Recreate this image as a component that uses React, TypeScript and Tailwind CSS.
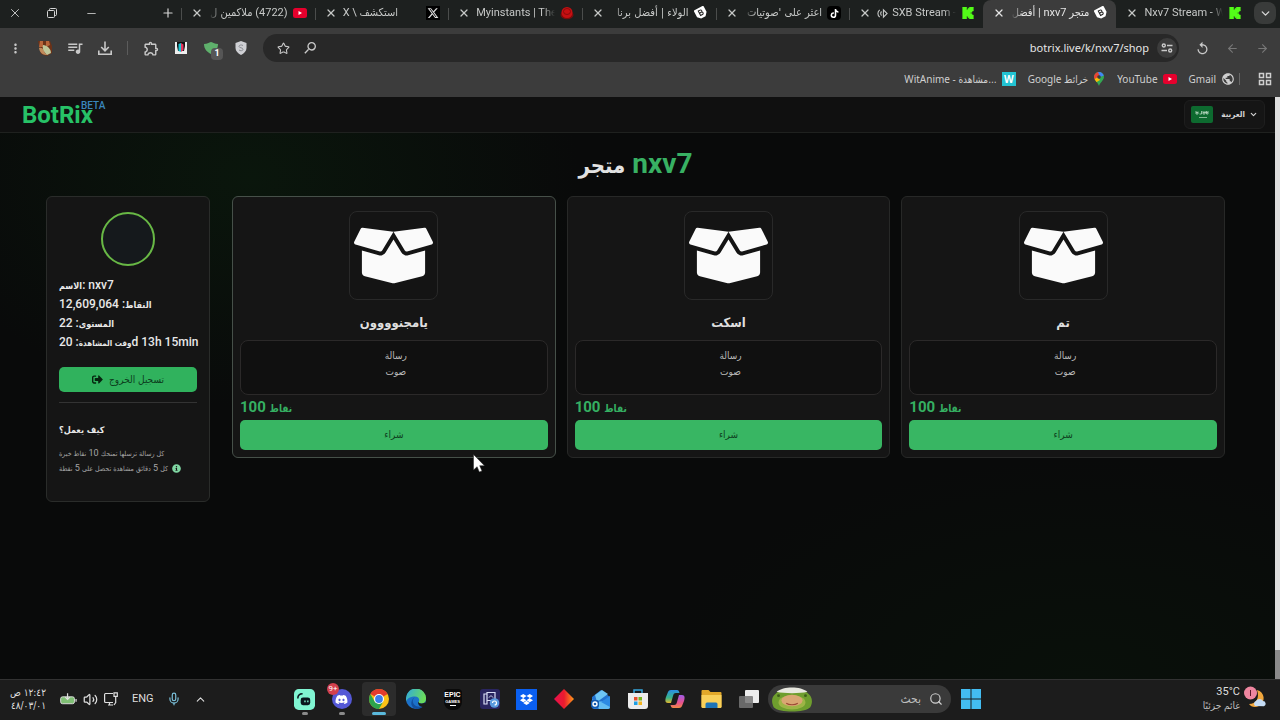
import type { ReactNode } from "react";
import {
  X,
  Plus,
  Minus,
  Star,
  ChevronDown,
  ChevronUp,
  ArrowLeft,
  ArrowRight,
  Mic,
  Volume2,
  Search,
} from "lucide-react";
import { FaBoxOpen, FaSignOutAlt, FaTiktok, FaDropbox, FaDiscord, FaInfoCircle } from "react-icons/fa";
import { FaXTwitter } from "react-icons/fa6";
import { MdQueueMusic, MdMoreVert, MdPublic, MdOutlineExtension, MdSearch, MdReplay } from "react-icons/md";

function Ar({ children, className = "" }: { children: ReactNode; className?: string }) {
  return (
    <span lang="ar" className={`font-['DejaVu_Sans_Condensed','DejaVu_Sans',sans-serif] ${className}`}>
      {children}
    </span>
  );
}

/* ---------- small logos ---------- */

function KickLogo() {
  return (
    <svg viewBox="0 0 24 24" className="size-3 shrink-0" fill="#53fc18" aria-hidden="true">
      <path d="M1.333 0h8v5.333H12V2.667h2.667V0h8v8H20v2.667h-2.667v2.666H20V16h2.667v8h-8v-2.667H12v-2.666H9.333V24h-8Z" stroke="#53fc18" />
    </svg>
  );
}

function YoutubeLogo() {
  return (
    <svg viewBox="0 0 14 10" className="h-2.5 w-3.5 shrink-0" aria-hidden="true">
      <rect width="14" height="10" rx="2.500" fill="#e6002d" />
      <path d="M5.500 3v4L9 5z" fill="#fff" />
    </svg>
  );
}

function BotrixLogo() {
  return (
    <svg viewBox="0 0 14 14" className="size-3.5 shrink-0" aria-hidden="true">
      <g transform="rotate(-28 7 7)">
        <path d="M2.500 1.500h9a1 1 0 0 1 1 1v6L9.500 12H4.500l-3-3V2.500a1 1 0 0 1 1-1z" fill="#fff" />
        <path d="M5.500 4h2a1.200 1.200 0 0 1 0 2.500h-2zM5.500 6.500H8A1.300 1.300 0 0 1 8 9H5.500z" fill="none" stroke="#222" />
      </g>
    </svg>
  );
}

function XLogo() {
  return (
    <span className="flex size-3.5 shrink-0 items-center justify-center bg-black">
      <FaXTwitter size={12} color="#ddd" />
    </span>
  );
}

function TiktokLogo() {
  return (
    <span className="flex size-3.5 shrink-0 items-center justify-center rounded-sm bg-black">
      <FaTiktok size={9} color="#fff" />
    </span>
  );
}

function MyinstantsLogo() {
  return (
    <svg viewBox="0 0 14 14" className="size-3.5 shrink-0" aria-hidden="true">
      <ellipse cx="7" cy="9" rx="6.500" ry="4.200" fill="#7a0d0d" />
      <circle cx="7" cy="6.500" r="5.500" fill="#c70f12" />
      <ellipse cx="7" cy="5.500" rx="3.500" ry="3" fill="none" stroke="#8c0a0a" />
    </svg>
  );
}

function MapsPin() {
  return (
    <svg viewBox="0 0 12 14" className="h-3.5 w-3 shrink-0" aria-hidden="true">
      <clipPath id="pin">
        <path d="M6 0a5 5 0 0 1 5 5c0 3-3.500 5-5 9C4.500 10 1 8 1 5a5 5 0 0 1 5-5z" />
      </clipPath>
      <g clipPath="url(#pin)">
        <rect width="12" height="14" fill="#34a853" />
        <path d="M0 0h6v5L1 9H0z" fill="#ea4335" />
        <path d="M5 0h7v3L7 5z" fill="#4285f4" />
        <path d="M0 8 5 5l2 3-5 3z" fill="#fbbc04" />
      </g>
      <circle cx="6" cy="5" r="1.800" fill="#3c3c3c" />
    </svg>
  );
}

/* ---------- browser chrome ---------- */

type TabInfo = { title: ReactNode; icon: ReactNode; rtl?: boolean; active?: boolean };

const tabs: TabInfo[] = [
  { title: <>(4722) <Ar>ملاكمين ل</Ar></>, icon: <YoutubeLogo />, rtl: true },
  { title: <>X \ <Ar>استكشف</Ar></>, icon: <XLogo /> },
  { title: "Myinstants | The", icon: <MyinstantsLogo /> },
  { title: <Ar>الولاء | أفضل برنا</Ar>, icon: <BotrixLogo />, rtl: true },
  { title: <Ar>اعثر على 'صوتيات</Ar>, icon: <TiktokLogo />, rtl: true },
  {
    title: (
      <span className="flex items-center gap-1">
        <svg viewBox="0 0 12 12" className="size-[11px] shrink-0" fill="none" stroke="currentColor" strokeWidth="1.200" aria-hidden="true">
          <path d="M3 2a5 5 0 0 0 0 8M5 3.800a3 3 0 0 0 0 4.400M7 2v8l4-4z" />
        </svg>
        SXB Stream -
      </span>
    ),
    icon: <KickLogo />,
  },
  { title: <><Ar>متجر</Ar> nxv7 | <Ar>أفضل</Ar></>, icon: <BotrixLogo />, rtl: true, active: true },
  { title: "Nxv7 Stream - W", icon: <KickLogo /> },
];

function Tab({ tab, divider }: { tab: TabInfo; divider: boolean }) {
  const fade = tab.rtl
    ? "text-right [mask-image:linear-gradient(to_left,black_85%,transparent)]"
    : "text-left [mask-image:linear-gradient(to_right,black_85%,transparent)]";
  return (
    <div
      className={`relative flex h-7 min-w-0 flex-1 items-center gap-1 pr-[7px] pb-0.5 pl-2.5 ${
        tab.active ? "rounded-t-lg bg-[#3c3c3c] text-[#e4e4e4]" : "text-[#c6c8c7]"
      }`}
    >
      {divider && <span className="absolute top-2 left-0 h-3 w-px bg-[#4b4d4c]" />}
      <button aria-label="Close tab" className="mr-0.5 shrink-0">
        <X size={12} strokeWidth={2.500} />
      </button>
      <span
        dir={tab.rtl ? "rtl" : "ltr"}
        className={`min-w-0 flex-1 overflow-hidden text-[11px] leading-4 whitespace-nowrap ${fade}`}
      >
        {tab.title}
      </span>
      <span className="flex w-4 shrink-0 justify-center">{tab.icon}</span>
    </div>
  );
}

function TabStrip() {
  return (
    <div className="flex h-7 items-center bg-[#1d201f] pr-1 text-[#d6d6d6]">
      <div className="flex w-[181px] shrink-0 items-center pb-0.5">
        <button aria-label="Close window" className="flex w-[30px] justify-center">
          <X size={14} strokeWidth={1.500} />
        </button>
        <button aria-label="Restore window" className="flex w-11 justify-center">
          <svg viewBox="0 0 12 12" className="size-3" fill="none" stroke="currentColor" aria-hidden="true">
            <rect x="1.500" y="3.500" width="7" height="7" rx="1" />
            <path d="M3.500 3V2.500a1 1 0 0 1 1-1h5a1 1 0 0 1 1 1v5a1 1 0 0 1-1 1H9" />
          </svg>
        </button>
        <button aria-label="Minimise window" className="flex w-[34px] justify-center">
          <Minus size={13} strokeWidth={1.500} />
        </button>
        <button aria-label="New tab" className="mr-1.5 ml-auto">
          <Plus size={14} strokeWidth={2} />
        </button>
      </div>
      <div className="flex min-w-0 flex-1">
        {tabs.map((t, i) => (
          <Tab key={i} tab={t} divider={!t.active && !tabs[i - 1]?.active} />
        ))}
      </div>
      <button aria-label="Search tabs" className="mb-0.5 ml-1 flex size-[22px] shrink-0 items-center justify-center rounded-lg bg-[#393b3a]">
        <ChevronDown size={13} strokeWidth={2.500} />
      </button>
    </div>
  );
}

function Tool({ label, children }: { label: string; children: ReactNode }) {
  return (
    <button aria-label={label} className="relative flex h-7 w-[30px] shrink-0 items-center justify-center">
      {children}
    </button>
  );
}

function Toolbar() {
  return (
    <div className="flex h-10 items-center bg-[#3c3c3c] pr-[3px] text-[#c9c9c9]">
      <Tool label="Menu">
        <MdMoreVert size={15} />
      </Tool>
      <Tool label="Profile">
        <svg viewBox="0 0 16 16" className="size-4" aria-hidden="true">
          <path d="M1 1h12l2 5v7l-5 3-6-2z" fill="#6b3218" />
          <path d="M3 1h3v6H2zM9 1h3l1 4-4 2z" fill="#b8663a" />
          <path d="M2 8c2-1 4 0 5 3s3 4 5 3c-3 2-9 1-10-6z" fill="#c08a5a" />
          <path d="M6 5c4 0 8 4 8 8l-4 2C7 12 5 9 6 5z" fill="#bfc79a" />
        </svg>
      </Tool>
      <Tool label="Media controls">
        <MdQueueMusic size={18} />
      </Tool>
      <Tool label="Downloads">
        <svg viewBox="0 0 14 14" className="size-3.5" fill="none" stroke="currentColor" strokeWidth="1.600" aria-hidden="true">
          <path d="M7 .5v9M3.200 6 7 9.800 10.800 6M.8 9.500v3.700h12.400V9.500" />
        </svg>
      </Tool>
      <span className="mr-2 ml-[7px] h-3.5 w-px bg-[#5c5c5c]" />
      <Tool label="Extensions">
        <MdOutlineExtension size={17} />
      </Tool>
      <Tool label="Video downloader">
        <svg viewBox="0 0 12 12" className="size-3" aria-hidden="true">
          <rect width="12" height="12" fill="#eee" />
          <path d="M2 0h8v4l-1 5H3L2 4z" fill="#111" />
          <path d="M3.500 2 6 1v9l-2.500-1z" fill="#19c6d4" />
          <path d="M6 1l2.500 1.500V8L6 10z" fill="#e8345c" />
        </svg>
      </Tool>
      <Tool label="Security extension">
        <svg viewBox="0 0 14 12" className="h-3 w-3.5" aria-hidden="true">
          <path d="M0 2c3 0 5-1.500 7-2 2 .5 4 2 7 2 0 5-3 8-7 10C3 10 0 7 0 2z" fill="#5fb06c" />
        </svg>
        <span className="absolute right-[3px] bottom-0.5 flex size-3 items-center justify-center rounded-sm bg-[#565656] text-[9px] font-bold text-white">
          1
        </span>
      </Tool>
      <Tool label="Shield extension">
        <svg viewBox="0 0 12 14" className="h-3.5 w-3" aria-hidden="true">
          <path d="M6 0l5.500 2v5c0 3-2.500 5.500-5.500 7C3 12.500.5 10 .5 7V2z" fill="#cfd0d4" />
          <path d="M8 4.500C6.500 3.500 4 4 4 5.500S8 6.500 8 8.300 5 10 4 9" fill="none" stroke="#8b8d93" />
        </svg>
      </Tool>
      <div className="ml-[7px] flex h-7 min-w-0 flex-1 items-center rounded-full bg-[#282828] pr-0.5 pl-3.5">
        <button aria-label="Bookmark this page">
          <Star size={13} />
        </button>
        <button aria-label="Zoom" className="ml-3">
          <MdSearch size={16} className="-scale-x-100" />
        </button>
        <input
          aria-label="Address"
          dir="ltr"
          defaultValue="botrix.live/k/nxv7/shop"
          className="mx-2 min-w-0 flex-1 bg-transparent text-right font-['Noto_Sans',sans-serif] text-[11px] text-[#e6e6e6] outline-none"
        />
        <button aria-label="Site information" className="flex size-5 items-center justify-center rounded-full bg-[#3c3c3c]">
          <svg viewBox="0 0 12 12" className="size-3" fill="none" stroke="currentColor" strokeWidth="1.400" aria-hidden="true">
            <circle cx="2.800" cy="3.500" r="1.500" />
            <path d="M6 3.500h5.500M.5 8.500H6" />
            <circle cx="9.200" cy="8.500" r="1.500" />
          </svg>
        </button>
      </div>
      <div className="ml-2 flex shrink-0">
        <Tool label="Reload">
          <MdReplay size={15} />
        </Tool>
        <Tool label="Back">
          <ArrowLeft size={13} color="#777" />
        </Tool>
        <Tool label="Forward">
          <ArrowRight size={13} color="#777" />
        </Tool>
      </div>
    </div>
  );
}

function Bookmarks() {
  const link = "flex items-center gap-[5px]";
  return (
    <nav dir="ltr" className="flex h-[29px] items-center justify-end gap-3 bg-[#3c3c3c] pr-2 pb-[7px] font-['Noto_Sans',sans-serif] text-[10px] text-[#cfcfcf]">
      <a href="#witanime" className={link}>
        <span>WitAnime - <Ar>مشاهدة...</Ar></span>
        <span className="flex size-3.5 items-center justify-center bg-[#22c3d2] font-bold text-white">W</span>
      </a>
      <a href="#maps" className={link}>
        <span>Google <Ar>خرائط</Ar></span>
        <MapsPin />
      </a>
      <a href="#youtube" className={link}>
        YouTube
        <YoutubeLogo />
      </a>
      <a href="#gmail" className={link}>
        Gmail
        <MdPublic size={14} />
      </a>
      <span className="-ml-2 h-3 w-px bg-[#666]" />
      <button aria-label="All bookmarks" className="ml-1.5">
        <svg viewBox="0 0 14 14" className="size-3.5" fill="none" stroke="currentColor" strokeWidth="1.500" aria-hidden="true">
          <path d="M1.500 1.500h4v4h-4zM8.500 1.500h4v4h-4zM1.500 8.500h4v4h-4zM8.500 8.500h4v4h-4z" />
        </svg>
      </button>
    </nav>
  );
}

/* ---------- shop page ---------- */

function SiteHeader() {
  return (
    <header className="flex h-9 items-center justify-between border-b border-[#1f211f] bg-[#101010] pr-2.5 pl-[22px]">
      <a href="#home" className="relative text-2xl leading-none font-bold text-[#27c267]">
        BotRix
        <sup className="absolute -top-0.5 left-[59px] text-[10px] leading-none font-medium text-[#3a86bd]">BETA</sup>
      </a>
      <button className="flex h-[29px] items-center gap-2 rounded-md border border-[#1e1e1e] bg-[#151515] px-1.5 text-[#d6d6d6]">
        <svg viewBox="0 0 22 17" className="h-[17px] w-[22px]" aria-hidden="true">
          <rect width="22" height="17" rx="2" fill="#0d6a2f" />
          <path d="M5 5v3h2V5.500M8.500 8h2V5M12 5v3h2V5M15.500 5v3H17V5M5 6.500h2M12 6.500h5" stroke="#b9d8c2" strokeWidth=".8" fill="none" />
          <path d="M8 11.500h8" stroke="#b9d8c2" strokeWidth=".7" />
        </svg>
        <Ar className="text-[8px] font-bold">العربية</Ar>
        <ChevronDown size={9} strokeWidth={3} className="-ml-1" />
      </button>
    </header>
  );
}

function ProfilePanel() {
  return (
    <aside className="flex w-[164px] shrink-0 flex-col self-start rounded-md border border-[#2a2c2a] bg-[#151515] px-3 pt-[15px] pb-[25px] text-[#e8e8e8]">
      <div className="size-[54px] self-center rounded-full border-2 border-[#68b845] bg-[#15191c]" />
      <div className="mt-2.5 grid auto-rows-[19px] text-[12px] leading-[18px] font-medium whitespace-nowrap">
        <p><Ar className="text-[9px] font-bold">الاسم</Ar>: nxv7</p>
        <p><Ar className="text-[9px] font-bold">النقاط</Ar>: 12,609,064</p>
        <p><Ar className="text-[9px] font-bold">المستوى</Ar>: 22</p>
        <p><Ar className="text-[8px] font-bold">وقت المشاهدة</Ar>: 20d 13h 15min</p>
      </div>
      <button className="mt-[15px] flex h-[25px] items-center justify-center gap-1.5 rounded-[5px] bg-[#30b25d] text-[#0c3d1e]">
        <FaSignOutAlt size={11} color="#06240f" />
        <Ar className="text-[10px]">تسجيل الخروج</Ar>
      </button>
      <hr className="mt-2.5 border-[#333]" />
      <h2 className="mt-[18px] text-[9px] leading-[18px] font-bold">
        <Ar>كيف يعمل؟</Ar>
      </h2>
      <div className="mt-[7px] grid auto-rows-[15px] text-[9px] leading-[14px] whitespace-nowrap text-[#a5a5a5]">
        <p><Ar className="text-[7px]">كل رسالة ترسلها تمنحك</Ar> 10 <Ar className="text-[7px]">نقاط خبرة</Ar></p>
        <p className="flex items-center gap-1">
          <span><Ar className="text-[7px]">كل</Ar> 5 <Ar className="text-[7px]">دقائق مشاهدة تحصل على</Ar> 5 <Ar className="text-[7px]">نقطة</Ar></span>
          <FaInfoCircle size={9} color="#7fd6a2" className="shrink-0" />
        </p>
      </div>
    </aside>
  );
}

function ProductCard({ name, active }: { name: string; active?: boolean }) {
  return (
    <article
      className={`flex flex-col rounded-md border bg-[#151515] px-[7px] pt-[14px] pb-[7px] ${
        active ? "border-[#465049]" : "border-[#272827]"
      }`}
    >
      <div className="flex size-[89px] items-center justify-center self-center rounded-lg border border-[#292929] bg-[#141414]">
        <FaBoxOpen size={79} color="#fafafa" />
      </div>
      <h2 className="mt-[13px] text-center text-[13px] leading-5 font-bold text-[#dedede]">
        <Ar>{name}</Ar>
      </h2>
      <div className="mt-[7px] h-[55px] rounded-lg border border-[#2b2929] bg-[#101010] pt-[7px] pl-1 text-center text-[10px] leading-4 text-[#b9b9b9]">
        <p><Ar>رسالة</Ar></p>
        <p><Ar>صوت</Ar></p>
      </div>
      <p className="pt-px text-[15px] leading-[23px] font-bold text-[#35b062]">
        100 <Ar className="text-[10px]">نقاط</Ar>
      </p>
      <button className="h-[30px] rounded-[5px] bg-[#38b663] pb-0.5 text-[10px] text-[#0f4221]">
        <Ar>شراء</Ar>
      </button>
    </article>
  );
}

function Shop() {
  return (
    <div className="flex flex-1 bg-[#090a0a]">
      <div className="min-w-0 flex-1 bg-[radial-gradient(ellipse_330px_230px_at_250px_80px,#0a160c,transparent),radial-gradient(ellipse_420px_220px_at_85%_100%,#09100a,transparent)] font-[Roboto,sans-serif]">
        <SiteHeader />
        <main className="pr-[50px] pl-[46px]">
          <h1 className="pt-[11px] pb-2.5 text-center text-[28px] leading-10 font-bold text-[#38b163]">
            <Ar className="text-[22px] text-[#e2e2e2]">متجر</Ar> nxv7
          </h1>
          <div className="flex gap-[22px]">
            <ProfilePanel />
            <section className="grid flex-1 grid-cols-3 gap-[11px] self-start">
              <ProductCard name="يامجنوووون" active />
              <ProductCard name="اسكت" />
              <ProductCard name="تم" />
            </section>
          </div>
        </main>
      </div>
      <div className="w-[5px] shrink-0 bg-[#8a8a8a]">
        <div className="h-[95%] bg-[#dedede]" />
      </div>
    </div>
  );
}

/* ---------- taskbar ---------- */

function AppSlot({ label, running, active, children }: { label: string; running?: boolean; active?: boolean; children: ReactNode }) {
  return (
    <button aria-label={label} className="relative flex h-9 w-[37px] items-center justify-center">
      <span className={`flex h-[34px] w-[34px] items-center justify-center rounded ${active ? "bg-[#2c2c2c]" : ""}`}>{children}</span>
      {running && (
        <span className={`absolute bottom-0.5 h-[3px] rounded-full ${active ? "w-3.5 bg-[#5ab9dc]" : "w-1.5 bg-[#8b8b8b]"}`} />
      )}
    </button>
  );
}

function Apps() {
  return (
    <div className="flex items-center">
      <AppSlot label="Streamlabs" running>
        <svg viewBox="0 0 22 22" className="size-[21px]" aria-hidden="true">
          <rect width="22" height="22" rx="5" fill="#80f5d2" />
          <rect x="7" y="9" width="10" height="8" rx="2.500" fill="#09161d" />
          <path d="M4 10c0-3 2-5 5-5" stroke="#09161d" strokeWidth="1.600" fill="none" />
          <path d="M11.500 12v2M14.500 12v2" stroke="#80f5d2" strokeWidth="1.400" />
        </svg>
      </AppSlot>
      <AppSlot label="Discord" running>
        <span className="flex size-5 items-center justify-center rounded-full bg-[#5458d6]">
          <FaDiscord size={13} color="#fff" />
        </span>
        <span className="absolute top-0.5 left-1 flex size-3 items-center justify-center rounded-full bg-[#d2404d] text-[8px] text-white">9+</span>
      </AppSlot>
      <AppSlot label="Chrome" running active>
        <svg viewBox="0 0 20 20" className="size-5" aria-hidden="true">
          <circle cx="10" cy="10" r="10" fill="#fbc116" />
          <path d="M10 10 1.340 5A10 10 0 0 1 18.660 5z" fill="#e33b2e" />
          <path d="M1.340 5A10 10 0 0 0 10 20l4.300-7.500L10 10l-4.300 2.500z" fill="#2da44e" />
          <circle cx="10" cy="10" r="5" fill="#fff" />
          <circle cx="10" cy="10" r="3.900" fill="#3b7ded" />
        </svg>
      </AppSlot>
      <AppSlot label="Edge">
        <svg viewBox="0 0 20 20" className="size-5" aria-hidden="true">
          <defs>
            <linearGradient id="edge" x1="0" y1="0" x2="1" y2=".3">
              <stop offset="0" stopColor="#2fa8e0" />
              <stop offset="1" stopColor="#6bdc5c" />
            </linearGradient>
          </defs>
          <circle cx="10" cy="10" r="10" fill="#1c71c9" />
          <path d="M0 9a10 10 0 0 1 20 1c0 3-2 4.500-4.500 4.500-3 0-3.500-1-2.500-2.500 1-2-1-4.500-4-4.500C5 7.500 1 9 0 13z" fill="url(#edge)" />
          <path d="M9 8c-3 2-3 7 1 9 3 1.500 6 .8 8.500-1.500-2 3.500-5 4.500-8.500 4.500-5-1-7-8-1-12z" fill="#134f9e" />
          <path d="M12.500 12.500c0 2 3 2.700 6.500 1L20 17l-3 1c-3 0-6-3-4.500-5.500z" fill="#1c1c1c" />
        </svg>
      </AppSlot>
      <AppSlot label="Epic Games">
        <span className="flex h-[21px] w-[18px] flex-col items-center rounded-t-sm rounded-b-lg bg-[#0a0a0a] pt-0.5 font-['Liberation_Sans',sans-serif] font-bold text-white">
          <span className="text-[7px] leading-[8px]">EPIC</span>
          <span className="text-[4px] leading-[5px]">GAMES</span>
          <span className="mt-px h-px w-1.5 bg-white" />
        </span>
      </AppSlot>
      <AppSlot label="Backup">
        <svg viewBox="0 0 20 20" className="size-5" aria-hidden="true">
          <rect width="20" height="20" rx="3" fill="#2a2560" />
          <path d="M4 5h3v10H4zM7 3.500h8v8H7z" fill="none" stroke="#d9dcf5" strokeWidth="1.200" />
          <path d="M9 8.500c1-2 3-2 4 0" fill="none" stroke="#d9dcf5" />
          <circle cx="14.500" cy="14" r="4.800" fill="#5a9be0" />
          <path d="M12.500 14a2 2 0 1 1 2 2" fill="none" stroke="#fff" strokeWidth="1.200" />
        </svg>
      </AppSlot>
      <AppSlot label="Dropbox">
        <span className="flex size-[21px] items-center justify-center bg-[#0a5ff0]">
          <FaDropbox size={13} color="#fff" />
        </span>
      </AppSlot>
      <AppSlot label="Media app">
        <svg viewBox="0 0 20 20" className="size-5" aria-hidden="true">
          <defs>
            <linearGradient id="gem">
              <stop offset="0" stopColor="#e8104f" />
              <stop offset=".5" stopColor="#e91b2e" />
              <stop offset="1" stopColor="#ff9a1a" />
            </linearGradient>
          </defs>
          <path d="M10 0 20 10 10 20 0 10z" fill="url(#gem)" />
        </svg>
      </AppSlot>
      <AppSlot label="Outlook">
        <svg viewBox="0 0 20 20" className="size-5" aria-hidden="true">
          <path d="M1 8 10 1l9 7v10a2 2 0 0 1-2 2H3a2 2 0 0 1-2-2z" fill="#2272cf" />
          <path d="m4 6 7-5 6 4-11 8z" fill="#6cc5f5" />
          <path d="M1 10c6 4 12 3 18-1v9a2 2 0 0 1-2 2H8z" fill="#63bdf3" />
          <path d="m10 13 9-6v11z" fill="#2d8be4" />
          <rect y="11" width="8" height="8" rx="2" fill="#145aad" />
          <circle cx="4" cy="15" r="2" fill="none" stroke="#fff" strokeWidth="1.400" />
        </svg>
      </AppSlot>
      <AppSlot label="Microsoft Store">
        <svg viewBox="0 0 20 20" className="size-5" aria-hidden="true">
          <path d="M6 5V1h8v4" fill="none" stroke="#35a5db" strokeWidth="1.500" />
          <path d="M0 4h20v13a3 3 0 0 1-3 3H3a3 3 0 0 1-3-3z" fill="#ececec" />
          <path d="M6 8h3.500v3.500H6z" fill="#e8502d" />
          <path d="M10.500 8H14v3.500h-3.500z" fill="#7ab51d" />
          <path d="M6 12.500h3.500V16H6z" fill="#1e9fe4" />
          <path d="M10.500 12.500H14V16h-3.500z" fill="#f6b51e" />
        </svg>
      </AppSlot>
      <AppSlot label="Copilot">
        <svg viewBox="0 0 20 20" className="size-5" aria-hidden="true">
          <defs>
            <linearGradient id="cpa" x1="0" y1="0" x2="0" y2="1">
              <stop offset="0" stopColor="#2a8fe6" />
              <stop offset=".6" stopColor="#39b58a" />
              <stop offset="1" stopColor="#e6b62b" />
            </linearGradient>
            <linearGradient id="cpb" x1="0" y1="0" x2="0" y2="1">
              <stop offset="0" stopColor="#a05be8" />
              <stop offset=".6" stopColor="#e8528a" />
              <stop offset="1" stopColor="#f08a45" />
            </linearGradient>
          </defs>
          <path d="M6 1h6c1.500 0 2 1 2.500 3H11c-2 0-2.500 1-3 3l-2 7H3c-3 0-3-3-2-6l2-5c.5-1.300 1.500-2 3-2z" fill="url(#cpa)" />
          <path d="M14 19H8c-1.500 0-2-1-2.500-3H9c2 0 2.500-1 3-3l2-7h3c3 0 3 3 2 6l-2 5c-.5 1.300-1.500 2-3 2z" fill="url(#cpb)" />
        </svg>
      </AppSlot>
      <AppSlot label="File Explorer">
        <svg viewBox="0 0 20 18" className="h-[18px] w-[21px]" aria-hidden="true">
          <path d="M0 1a1 1 0 0 1 1-1h6l2 2h10a1 1 0 0 1 1 1v14H0z" fill="#e2a82a" />
          <path d="M0 5h20v12a1 1 0 0 1-1 1H1a1 1 0 0 1-1-1z" fill="#f9d05a" />
          <path d="M4 18v-4a1.500 1.500 0 0 1 1.500-1.500h9A1.500 1.500 0 0 1 16 14v4z" fill="#1d74b8" />
        </svg>
      </AppSlot>
      <AppSlot label="Task view">
        <svg viewBox="0 0 20 20" className="size-5" aria-hidden="true">
          <rect x="6" y="1" width="14" height="13" rx="1" fill="#ededed" />
          <rect x="0" y="7" width="14" height="12" rx="1" fill="#777" opacity=".85" />
        </svg>
      </AppSlot>
      <label className="mx-px flex h-7 w-[183px] items-center rounded-full bg-[#3a3a3a] pr-2 pl-[3px] text-[#d0d0d0]">
        <svg viewBox="0 0 42 26" className="h-[25px] w-[42px] shrink-0" aria-hidden="true">
          <path d="M4 7C10 0 32 0 38 7c4 3 5 9 2 14-6 6-32 6-38 0C-1 15 0 10 4 7z" fill="#6f9e2e" />
          <path d="M5 5C12-1 30-1 37 5c-8 2-24 2-32 0z" fill="#e8e8df" />
          <ellipse cx="21" cy="16" rx="14" ry="7.500" fill="#9db546" />
          <ellipse cx="21" cy="14" rx="11" ry="6" fill="#d9a673" />
          <path d="M15 17c3 2 9 2 12 0" stroke="#9c4a36" strokeWidth="1.200" fill="none" />
          <circle cx="7" cy="9" r="1.500" fill="#3f5f1a" />
          <circle cx="35" cy="9" r="1.500" fill="#3f5f1a" />
        </svg>
        <input
          aria-label="Search"
          dir="rtl"
          placeholder="بحث"
          className="mr-2 min-w-0 flex-1 bg-transparent font-['DejaVu_Sans_Condensed','DejaVu_Sans',sans-serif] text-xs outline-none placeholder:text-[#bdbdbd]"
        />
        <Search size={14} />
      </label>
      <AppSlot label="Start">
        <svg viewBox="0 0 20 20" className="size-5" fill="#43bdf2" aria-hidden="true">
          <path d="M0 0h9.500v9.500H0zM10.500 0H20v9.500h-9.500zM0 10.500h9.500V20H0zM10.500 10.500H20V20h-9.500z" />
        </svg>
      </AppSlot>
    </div>
  );
}

function Taskbar() {
  return (
    <footer className="grid h-[41px] grid-cols-[1fr_auto_1fr] items-center border-t border-[#323232] bg-[#1c1c1c] pb-0.5 text-[#dedede]">
      <div className="flex items-center">
        <div dir="rtl" className="w-[50px] shrink-0 pr-1 font-['DejaVu_Sans_Condensed','DejaVu_Sans',sans-serif] text-[10px] leading-[13px] whitespace-nowrap">
          <p>١٢:٤٢ ص</p>
          <p>٤٨/٠٣/٠١</p>
        </div>
        <svg viewBox="0 0 18 12" className="ml-2.5 h-3 w-[17px]" aria-hidden="true">
          <rect x=".7" y="3.700" width="14.600" height="7.300" rx="2" fill="#7fbf74" stroke="#dedede" />
          <path d="M17 6v3M8 0v6M5.500 4 8 6.500 10.500 4" stroke="#dedede" strokeWidth="1.300" fill="none" />
        </svg>
        <Volume2 size={15} strokeWidth={2} className="ml-1.5" />
        <svg viewBox="0 0 14 14" className="ml-1.5 size-3.5" fill="none" stroke="currentColor" strokeWidth="1.200" aria-hidden="true">
          <path d="M9 1.500H1.500A1 1 0 0 0 .6 2.500v7a1 1 0 0 0 1 1H9M4 13h5M5.500 10.500V13" />
          <path d="M10 .8h3.300v3.500H10zM11.700 4.500v6L10 13" />
        </svg>
        <span className="ml-3.5 w-[22px] text-[11px]">ENG</span>
        <Mic size={14} strokeWidth={2} color="#7cc3dd" className="ml-[13px]" />
        <ChevronUp size={13} className="ml-[13px]" />
      </div>
      <div className="pr-[5px]">
        <Apps />
      </div>
      <div className="flex items-center justify-end gap-1 pr-3">
        <div className="text-right text-[11px] leading-[14px] whitespace-nowrap">
          <p>35°C</p>
          <p dir="rtl" className="text-left text-[#bfbfbf]"><Ar className="text-[10px]">غائم جزئيًا</Ar></p>
        </div>
        <svg viewBox="0 0 24 28" className="h-7 w-6" aria-hidden="true">
          <path d="M13 5c8 2 9 12 2 16-4 2-8 1-10-2 7 0 11-6 8-14z" fill="#f0a63c" />
          <path d="M11 21a3 3 0 0 1 1-5 4 4 0 0 1 7 0 2.700 2.700 0 0 1 1 5.200z" fill="#c5dcf5" />
          <circle cx="6.500" cy="8" r="6.500" fill="#ef86a0" />
          <path d="M6.500 5v6" stroke="#5b1a2a" />
        </svg>
      </div>
    </footer>
  );
}

export default function App() {
  return (
    <div dir="ltr" className="relative flex min-h-screen flex-col bg-[#090a0a] font-['Roboto','DejaVu_Sans_Condensed',sans-serif]">
      <TabStrip />
      <Toolbar />
      <Bookmarks />
      <Shop />
      <Taskbar />
      <svg viewBox="0 0 12 19" className="pointer-events-none absolute top-[454px] left-[473px] h-[19px] w-3" aria-hidden="true">
        <path d="M.5.5v15.500l3.600-3.300 2.200 5.300 2.700-1.100-2.300-5.200h4.800z" fill="#fff" stroke="#222" strokeWidth=".5" />
      </svg>
    </div>
  );
}
